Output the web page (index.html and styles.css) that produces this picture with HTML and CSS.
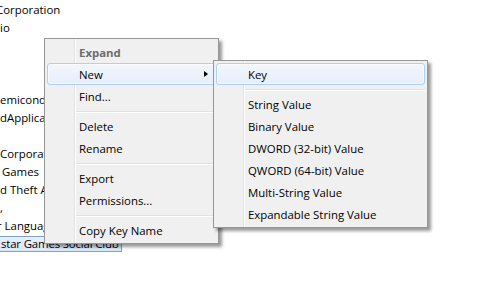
FILE: index.html
```html
<!DOCTYPE html>
<html>
<head>
<meta charset="utf-8">
<link rel="stylesheet" href="styles.css">
</head>
<body>
<div class="tree">
  <div class="row"><span class="lbl cut4">Corporation</span></div>
  <div class="row"><span class="lbl">io</span></div>
  <div class="row"></div>
  <div class="row"></div>
  <div class="row"></div>
  <div class="row"><span class="lbl">emiconductor</span></div>
  <div class="row"><span class="lbl">dApplications</span></div>
  <div class="row"></div>
  <div class="row"><span class="lbl">Corporation</span></div>
  <div class="row"><span class="lbl in2">Games</span></div>
  <div class="row"><span class="lbl">d Theft Auto</span></div>
  <div class="row"><span class="lbl">,</span></div>
  <div class="row"><span class="lbl cut3">r Language</span></div>
  <div class="row"><span class="lbl selbox">star Games Social Club</span></div>
</div>

<div class="menu main">
  <div class="item disabled">Expand</div>
  <div class="item hot"><span class="txt">New</span><span class="arrow"></span></div>
  <div class="item">Find...</div>
  <div class="sep"></div>
  <div class="item">Delete</div>
  <div class="item">Rename</div>
  <div class="sep"></div>
  <div class="item">Export</div>
  <div class="item">Permissions...</div>
  <div class="sep"></div>
  <div class="item">Copy Key Name</div>
</div>

<div class="menu sub">
  <div class="item hot">Key</div>
  <div class="sep"></div>
  <div class="item">String Value</div>
  <div class="item">Binary Value</div>
  <div class="item">DWORD (32-bit) Value</div>
  <div class="item">QWORD (64-bit) Value</div>
  <div class="item">Multi-String Value</div>
  <div class="item">Expandable String Value</div>
</div>
</body>
</html>
```

FILE: styles.css
```css
html, body {
  margin: 0;
  padding: 0;
}
body {
  width: 490px;
  height: 282px;
  overflow: hidden;
  background: #ffffff;
  font-family: "Open Sans", "Noto Sans", sans-serif;
  font-size: 11.4px;
  color: #000;
  position: relative;
}

.tree {
  padding-top: 1px;
}
.row {
  height: 18px;
  display: flex;
  align-items: center;
  white-space: nowrap;
}
.lbl {
  line-height: 18px;
}
.cut4 {
  margin-left: -4px;
}
.cut3 {
  margin-left: -3px;
}
.in2 {
  margin-left: 2px;
}
.selbox {
  line-height: 14px;
  border: 1px solid #7da2ce;
  background: linear-gradient(#e8f1fc, #d9e8f9);
  padding: 0 2px 0 4px;
  margin-left: -4px;
  letter-spacing: -0.15px;
}

.menu {
  position: absolute;
  box-sizing: border-box;
  border: 1px solid #979797;
  padding: 2px;
  background:
    linear-gradient(to right, transparent 29px, #e2e3e3 29px, #e2e3e3 30px, #ffffff 30px, #ffffff 31px, transparent 31px),
    #f0f0f0;
  box-shadow: 3px 3px 3px rgba(0, 0, 0, 0.4);
}
.main {
  left: 44px;
  top: 38px;
  width: 175px;
}
.sub {
  left: 213px;
  top: 60px;
  width: 215px;
}

.item {
  box-sizing: border-box;
  height: 22px;
  display: flex;
  align-items: center;
  padding-left: 31px;
  border: 1px solid transparent;
  border-radius: 3px;
  white-space: nowrap;
}
.item .txt {
  flex: 1;
}
.disabled {
  font-weight: bold;
  color: #6d6d6d;
}
.hot {
  border-color: #aecff7;
  background: linear-gradient(#f3f7fd, #e6eefa);
  box-shadow: inset 0 0 0 1px rgba(255, 255, 255, 0.55);
}
.arrow {
  width: 0;
  height: 0;
  border-left: 4px solid #000;
  border-top: 3.5px solid transparent;
  border-bottom: 3.5px solid transparent;
  margin-right: 7px;
}
.sep {
  height: 8px;
  box-sizing: border-box;
  padding-top: 4px;
  margin-left: 29px;
}
.sep::before {
  content: "";
  display: block;
  height: 1px;
  background: #e0e0e0;
  border-bottom: 1px solid #ffffff;
}
```
